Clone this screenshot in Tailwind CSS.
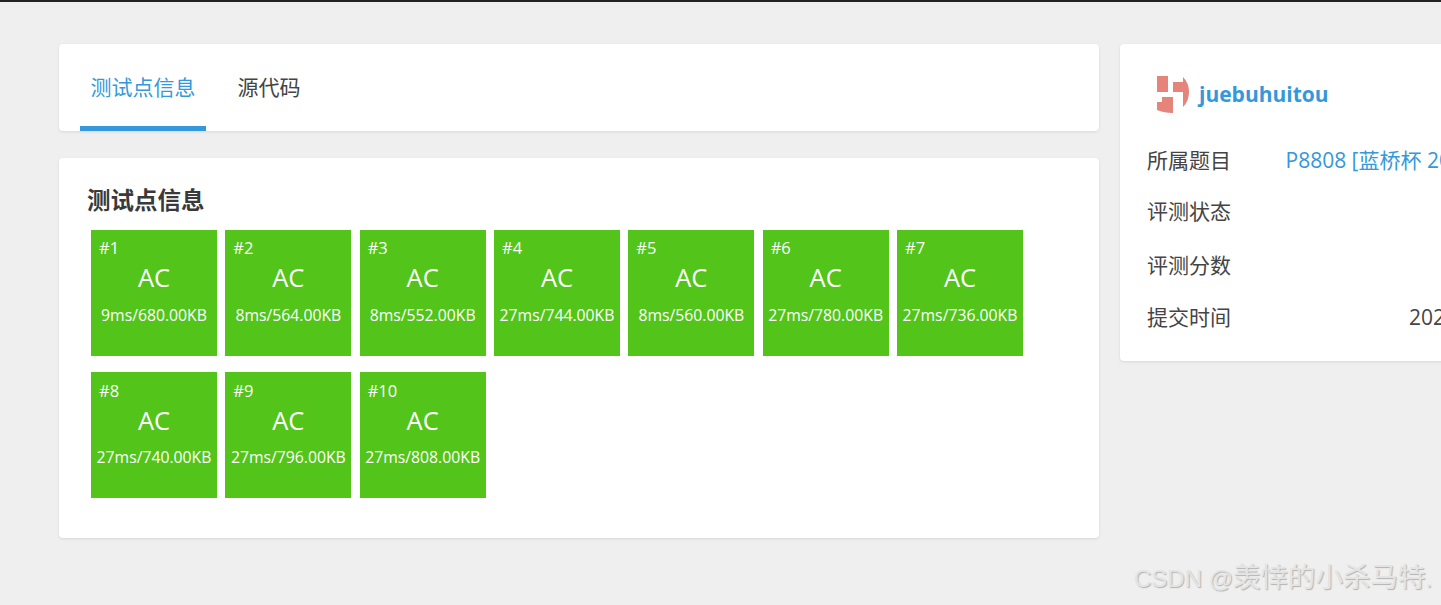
<!DOCTYPE html>
<html><head><meta charset="utf-8"><script src="https://cdn.jsdelivr.net/npm/@tailwindcss/browser@4"></script></head>
<body class="m-0 w-[1441px] h-[605px] overflow-hidden bg-[#efefef] relative font-['Open_Sans','Noto_Sans_CJK_SC',sans-serif] text-[#333]">
<div class="h-[2px] bg-[#222]"></div>
<div class="flex items-start gap-[21px] pl-[59px] pt-[42px] w-[1700px]">
  <main class="w-[1040px] flex flex-col gap-[27px]">
    <nav class="h-[87px] bg-white rounded shadow-[0_1px_3px_rgba(0,0,0,0.1)] flex pl-[21px]">
      <a class="h-full w-[126px] border-b-[5px] border-[#3498db] text-[#3498db] text-[21px] flex items-center justify-center pt-[5px]">测试点信息</a>
      <a class="h-full w-[126px] text-[21px] flex items-center justify-center pt-[1px] text-[#444]">源代码</a>
    </nav>
    <section class="h-[380px] bg-white rounded shadow-[0_1px_3px_rgba(0,0,0,0.1)] pl-[28px] pt-[26px]">
      <h3 class="text-[23.5px] font-bold leading-[32px] text-[#3a3a3a]">测试点信息</h3>
      <div class="flex flex-wrap w-[960px] gap-x-[8.34px] gap-y-[16px] pl-[4px] mt-[14px]">
        <div class="w-[126px] h-[126px] bg-[#52c41a] text-white relative text-center"><span class="absolute left-[8px] top-[8px] text-[16.5px] leading-[20px]">#1</span><div class="text-[25.5px] leading-[32px] pt-[31px]">AC</div><div class="text-[15.75px] leading-[20px] mt-[12px]">9ms/680.00KB</div></div>
        <div class="w-[126px] h-[126px] bg-[#52c41a] text-white relative text-center"><span class="absolute left-[8px] top-[8px] text-[16.5px] leading-[20px]">#2</span><div class="text-[25.5px] leading-[32px] pt-[31px]">AC</div><div class="text-[15.75px] leading-[20px] mt-[12px]">8ms/564.00KB</div></div>
        <div class="w-[126px] h-[126px] bg-[#52c41a] text-white relative text-center"><span class="absolute left-[8px] top-[8px] text-[16.5px] leading-[20px]">#3</span><div class="text-[25.5px] leading-[32px] pt-[31px]">AC</div><div class="text-[15.75px] leading-[20px] mt-[12px]">8ms/552.00KB</div></div>
        <div class="w-[126px] h-[126px] bg-[#52c41a] text-white relative text-center"><span class="absolute left-[8px] top-[8px] text-[16.5px] leading-[20px]">#4</span><div class="text-[25.5px] leading-[32px] pt-[31px]">AC</div><div class="text-[15.75px] leading-[20px] mt-[12px]">27ms/744.00KB</div></div>
        <div class="w-[126px] h-[126px] bg-[#52c41a] text-white relative text-center"><span class="absolute left-[8px] top-[8px] text-[16.5px] leading-[20px]">#5</span><div class="text-[25.5px] leading-[32px] pt-[31px]">AC</div><div class="text-[15.75px] leading-[20px] mt-[12px]">8ms/560.00KB</div></div>
        <div class="w-[126px] h-[126px] bg-[#52c41a] text-white relative text-center"><span class="absolute left-[8px] top-[8px] text-[16.5px] leading-[20px]">#6</span><div class="text-[25.5px] leading-[32px] pt-[31px]">AC</div><div class="text-[15.75px] leading-[20px] mt-[12px]">27ms/780.00KB</div></div>
        <div class="w-[126px] h-[126px] bg-[#52c41a] text-white relative text-center"><span class="absolute left-[8px] top-[8px] text-[16.5px] leading-[20px]">#7</span><div class="text-[25.5px] leading-[32px] pt-[31px]">AC</div><div class="text-[15.75px] leading-[20px] mt-[12px]">27ms/736.00KB</div></div>
        <div class="w-[126px] h-[126px] bg-[#52c41a] text-white relative text-center"><span class="absolute left-[8px] top-[9px] text-[16.5px] leading-[20px]">#8</span><div class="text-[25.5px] leading-[32px] pt-[32px]">AC</div><div class="text-[15.75px] leading-[20px] mt-[11px]">27ms/740.00KB</div></div>
        <div class="w-[126px] h-[126px] bg-[#52c41a] text-white relative text-center"><span class="absolute left-[8px] top-[9px] text-[16.5px] leading-[20px]">#9</span><div class="text-[25.5px] leading-[32px] pt-[32px]">AC</div><div class="text-[15.75px] leading-[20px] mt-[11px]">27ms/796.00KB</div></div>
        <div class="w-[126px] h-[126px] bg-[#52c41a] text-white relative text-center"><span class="absolute left-[8px] top-[9px] text-[16.5px] leading-[20px]">#10</span><div class="text-[25.5px] leading-[32px] pt-[32px]">AC</div><div class="text-[15.75px] leading-[20px] mt-[11px]">27ms/808.00KB</div></div>
      </div>
    </section>
  </main>
  <aside class="w-[500px] h-[317px] bg-white rounded shadow-[0_1px_3px_rgba(0,0,0,0.1)] pl-[27px] pt-[32px] text-[21px]">
    <div class="flex items-center gap-[10px] pl-[10px] h-[38px]">
      <svg width="32" height="38" viewBox="0 0 32 38" class="shrink-0"><path fill="#e4847a" d="M0 0H11V16H0ZM16 6H26V1Q32 7 32 16Q32 25 26 31V16H16ZM5 21H16V37Q7 37 0 34V26H5Z"/></svg>
      <span class="font-bold text-[#3498db]">juebuhuitou</span>
    </div>
    <div class="flex flex-col mt-[21px]">
      <div class="flex h-[52.33px] items-center"><span class="w-[138.5px] text-[#444]">所属题目</span><span class="text-[#3498db] whitespace-nowrap">P8808 [蓝桥杯 2022 省 C] 炼铁</span></div>
      <div class="flex h-[52.33px] items-center pb-[3px]"><span class="w-[139px] text-[#444]">评测状态</span></div>
      <div class="flex h-[52.33px] items-center"><span class="w-[139px] text-[#444]">评测分数</span></div>
      <div class="flex h-[52.33px] items-center"><span class="w-[262px] text-[#444]">提交时间</span><span class="whitespace-nowrap text-[#444]">2024-04-05 19:32:10</span></div>
    </div>
  </aside>
</div>
<div class="absolute left-[1134px] top-[561px] whitespace-nowrap text-[24px] leading-[34px] font-['Liberation_Sans','Noto_Sans_CJK_SC',sans-serif] text-[#e4e4e4] [text-shadow:1px_1px_1px_rgba(0,0,0,0.25)]">CSDN @<span class="text-[27.5px]">羡悻的小杀马特</span>.</div>
</body></html>
